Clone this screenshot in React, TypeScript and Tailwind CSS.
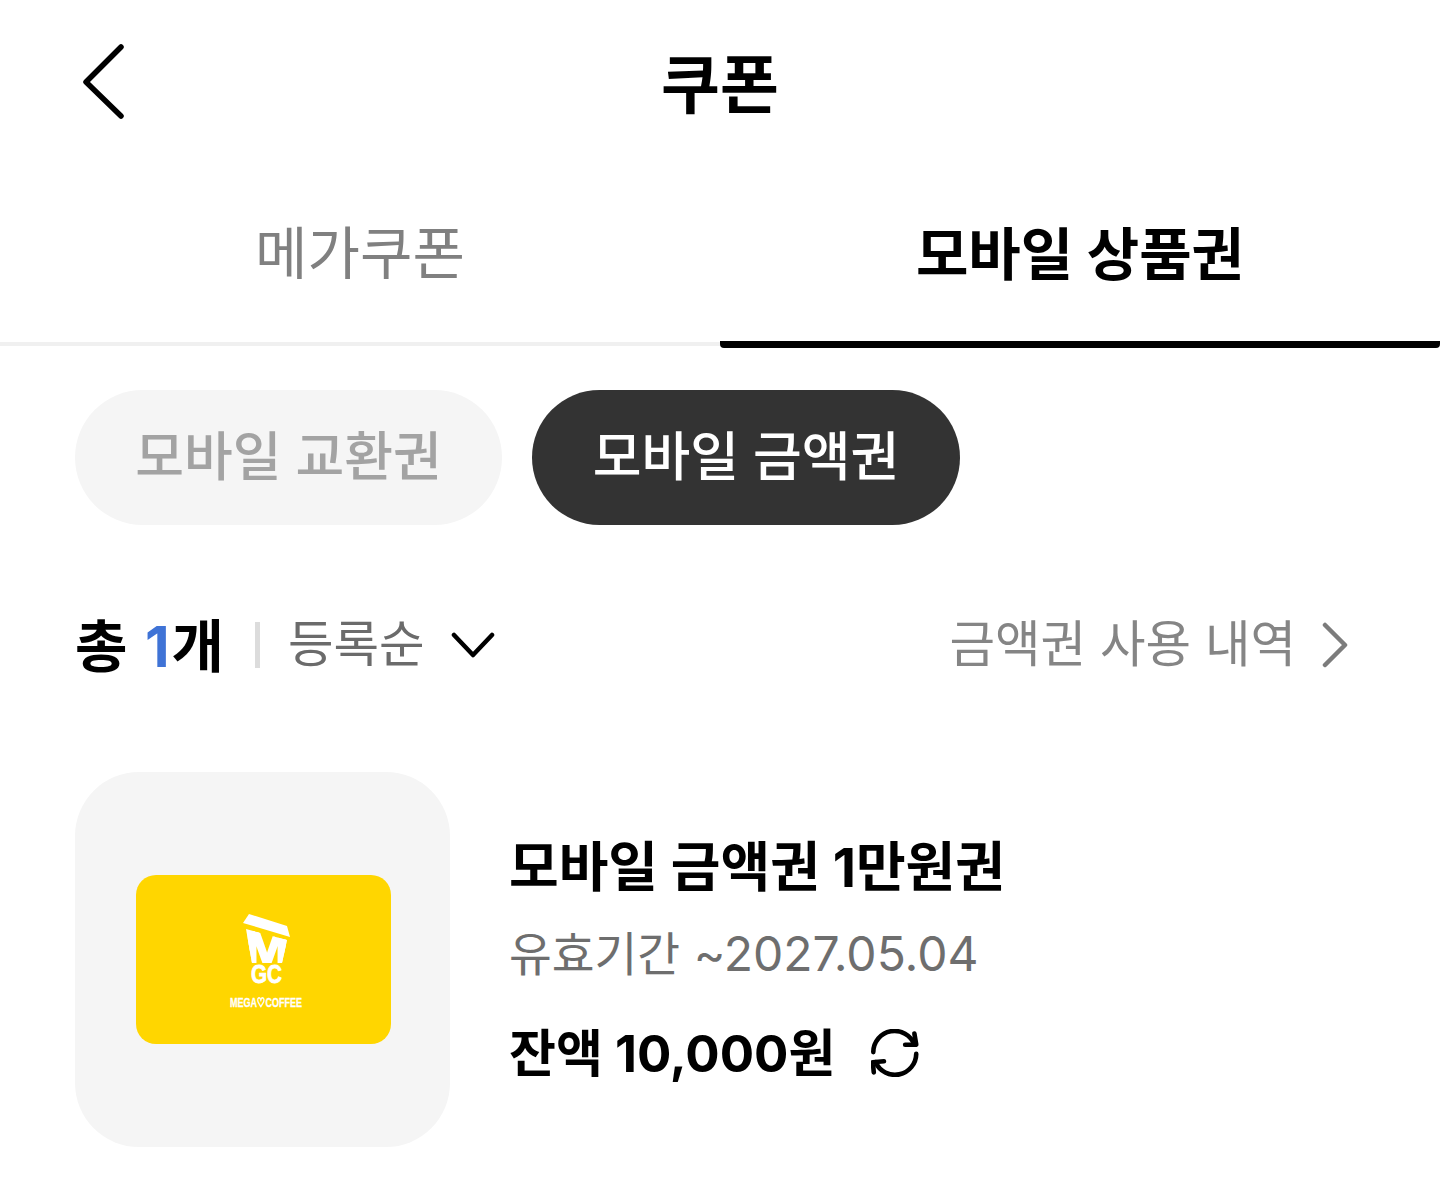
import React from 'react';

const font = "font-['Inter','Noto_Sans_CJK_KR','Noto_Sans',sans-serif]";

const MegaLogo = () => (
  <svg className="ml-[8px] overflow-visible" width="76" height="98" viewBox="0 0 76 98" fill="none">
    <defs>
      <clipPath id="cup">
        <polygon points="17,18 58,29 53,52 23,52" />
      </clipPath>
    </defs>
    <polygon points="14,12 20,3 58,15 61,26" fill="#fff" />
    <polygon points="17,18 26,20.5 26,52 23,52" fill="#fff" />
    <polygon points="58,29 50,27 50,52 53,52" fill="#fff" />
    <g clipPath="url(#cup)">
      <text x="38" y="54" textAnchor="middle" fontFamily="Liberation Sans" fontWeight="700" fontSize="48" fill="#fff" stroke="#fff" strokeWidth="2" textLength="44" lengthAdjust="spacingAndGlyphs">M</text>
    </g>
    <text x="37.5" y="72" textAnchor="middle" fontFamily="Liberation Sans" fontWeight="700" fontSize="25" fill="#fff" stroke="#fff" strokeWidth="0.8" textLength="31" lengthAdjust="spacingAndGlyphs">GC</text>
    <text x="37" y="96" textAnchor="middle" fontFamily="Liberation Sans" fontWeight="700" fontSize="13" fill="#fff" stroke="#fff" strokeWidth="0.3" textLength="72" lengthAdjust="spacingAndGlyphs">MEGA♡COFFEE</text>
  </svg>
);

export default function App() {
  return (
    <div className={`${font} w-[1440px] h-[1187px] bg-white overflow-hidden text-black`}>
      <header className="h-[166px] flex items-center relative justify-center pt-[4px]">
        <button className="absolute left-[81px] top-[43px]">
          <svg width="44" height="78" viewBox="0 0 44 78" fill="none">
            <path d="M40 4 L5 39 L40 73" stroke="#000" strokeWidth="5.5" strokeLinecap="round" strokeLinejoin="round" />
          </svg>
        </button>
        <h1 className="text-[64px] font-bold leading-none">쿠폰</h1>
      </header>

      <div className="flex h-[182px]">
        <div className="flex-1 flex items-center justify-center border-b-[4px] border-[#f0f0f0] text-[57px] text-[#808080] leading-none pb-[1px] h-[180px]">메가쿠폰</div>
        <div className="flex-1 flex items-center justify-center border-b-[7px] border-black rounded-b-[4px] text-[57px] font-bold leading-none pt-[2px] h-[182px]">모바일 상품권</div>
      </div>

      <div className="flex gap-[30px] pl-[75px] mt-[42px]">
        <div className="w-[427px] h-[135px] rounded-full bg-[#f5f5f5] flex items-center justify-center text-[53px] font-medium text-[#a3a3a3] leading-none">모바일 교환권</div>
        <div className="w-[428px] h-[135px] rounded-full bg-[#333333] flex items-center justify-center text-[53px] font-medium text-white leading-none">모바일 금액권</div>
      </div>

      <div className="flex items-center justify-between pl-[75px] pr-[91px] mt-[75px] h-[90px]">
        <div className="flex items-center">
          <span className="text-[57px] font-bold leading-none pt-[3px]">총 <span className="text-[#3f73d6] ml-[4px]">1</span><span className="ml-[2px]">개</span></span>
          <span className="w-[5px] h-[46px] bg-[#dcdcdc] ml-[31px] mr-[28px]" />
          <span className="text-[49.5px] text-[#6b6b6b] leading-none">등록순</span>
          <svg className="ml-[26px]" width="44" height="28" viewBox="0 0 44 28" fill="none">
            <path d="M3 4 L22 24 L41 4" stroke="#000" strokeWidth="4.5" strokeLinecap="round" strokeLinejoin="round" />
          </svg>
        </div>
        <div className="flex items-center">
          <span className="text-[49.5px] text-[#858585] leading-none">금액권 사용 내역</span>
          <svg className="ml-[25px]" width="28" height="46" viewBox="0 0 28 46" fill="none">
            <path d="M4 3 L24 23 L4 43" stroke="#7c7c7c" strokeWidth="4.5" strokeLinecap="round" strokeLinejoin="round" />
          </svg>
        </div>
      </div>

      <div className="flex items-center pl-[75px] mt-[82px]">
        <div className="w-[375px] h-[375px] rounded-[64px] bg-[#f5f5f5] flex items-center justify-center shrink-0">
          <div className="w-[255px] h-[169px] ml-[1px] rounded-[20px] bg-[#ffd600] flex items-center justify-center">
            <MegaLogo />
          </div>
        </div>
        <div className="ml-[59px] flex flex-col">
          <div className="text-[54px] font-bold leading-none mb-[35px]">모바일 금액권 1만원권</div>
          <div className="text-[48px] text-[#6e6e6e] leading-none"><span className="text-[46.5px]">유효기간</span> ~2027.05.04</div>
          <div className="flex items-center mt-[50px]">
            <span className="text-[51px] font-bold leading-none">잔액 10,000원</span>
            <svg className="ml-[36px]" width="48" height="48" viewBox="0 0 52 52" fill="none">
              <path d="M2.5 25 A23 23 0 0 1 47 17" stroke="#000" strokeWidth="5" strokeLinecap="round" />
              <path d="M47 5 L49 17 L37 17" stroke="#000" strokeWidth="5" strokeLinecap="round" strokeLinejoin="round" />
              <path d="M49 27 A23 23 0 0 1 5 36" stroke="#000" strokeWidth="5" strokeLinecap="round" />
              <path d="M3 47 L2 36 L14 35" stroke="#000" strokeWidth="5" strokeLinecap="round" strokeLinejoin="round" />
            </svg>
          </div>
        </div>
      </div>
    </div>
  );
}
